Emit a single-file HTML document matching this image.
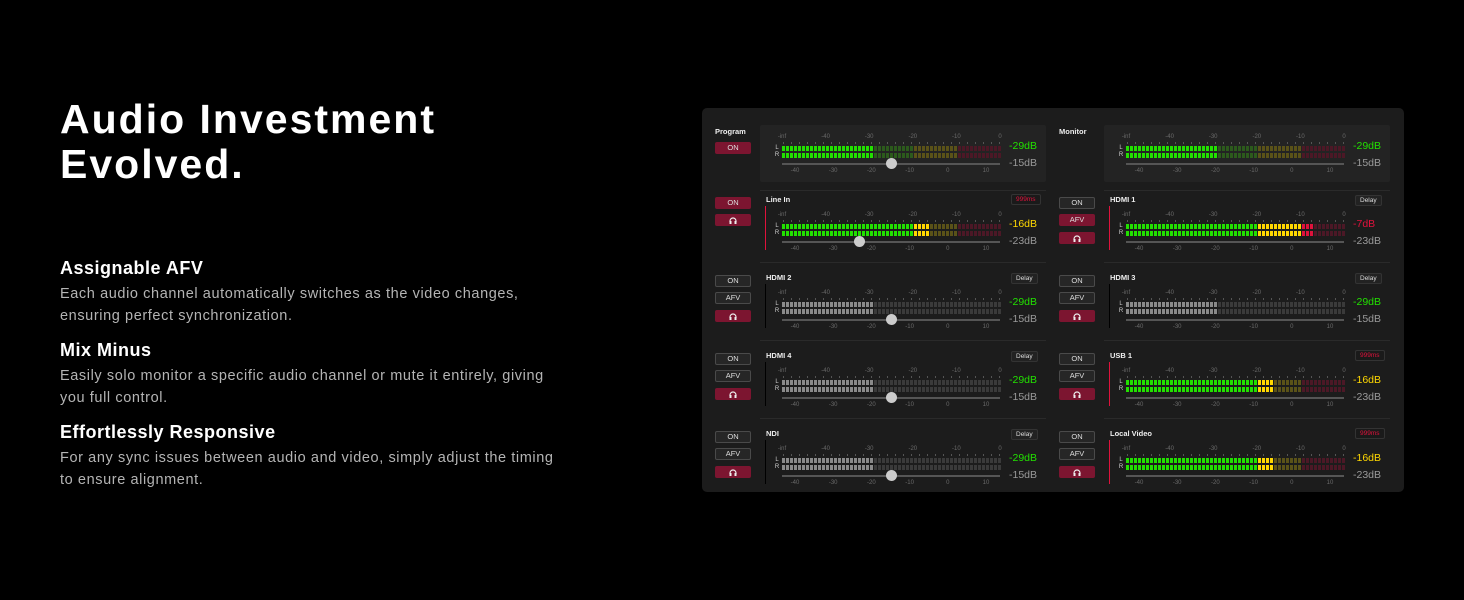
<!DOCTYPE html>
<html><head><meta charset="utf-8">
<style>
*{margin:0;padding:0;box-sizing:border-box}
body{width:1464px;height:600px;background:#000;position:relative;overflow:hidden;font-family:"Liberation Sans",sans-serif}
.a{position:absolute}
h1{position:absolute;left:60px;top:97px;color:#fff;font-size:41px;line-height:45px;font-weight:bold;letter-spacing:2px}
h2{position:absolute;left:60px;color:#fff;font-size:18px;font-weight:bold;letter-spacing:0.5px}
p.b{position:absolute;left:60px;color:#b4b4b4;font-size:14.5px;line-height:22px;letter-spacing:0.6px;width:540px}
#panel{position:absolute;left:702px;top:108px;width:702px;height:384px;background:#1c1c1c;border-radius:5px}
.t{position:absolute;font-size:6px;color:#6a6a6a;white-space:nowrap;transform:translateX(-50%)}
.btn{position:absolute;width:36px;height:12px;border-radius:2px;font-size:7.5px;color:#ddd;text-align:center;line-height:12px}
.on{background:#7c1530}
.off{background:#262626;border:1px solid #4a4a4a;line-height:10px}
.nm{position:absolute;font-size:7.5px;font-weight:bold;color:#eee}
.tag{position:absolute;font-size:6.5px;height:11px;line-height:10px;padding:0 4px;border:1px solid #333;border-radius:2px;background:#1a1a1a}
.db{position:absolute;font-size:10.5px;white-space:nowrap}
</style></head><body>
<h1>Audio Investment<br>Evolved.</h1>
<h2 style="top:258px">Assignable AFV</h2>
<p class="b" style="top:283px">Each audio channel automatically switches as the video changes,<br>ensuring perfect synchronization.</p>
<h2 style="top:340px">Mix Minus</h2>
<p class="b" style="top:365px">Easily solo monitor a specific audio channel or mute it entirely, giving<br>you full control.</p>
<h2 style="top:422px">Effortlessly Responsive</h2>
<p class="b" style="top:447px">For any sync issues between audio and video, simply adjust the timing<br>to ensure alignment.</p>
<div id="panel"></div>
<div id="root"></div>
<script>
var R=document.getElementById('root'),h='';
function add(s){h+=s}
var G='#22e000',Gd='#2c5a1c',Gy='#8a8a8a',Gyd='#3a3a3a',Y='#ffd800',Yd='#5a5218',Rd='#e0123c',Rdd='#4c1826';
function meter(ox,y,lvl,gray){
 var x0=ox+782,n=55,sw=4;
 var tl=['-inf','-40','-30','-20','-10','0'];
 for(var i=0;i<6;i++){add('<div class="t" style="left:'+(x0+i*43.6)+'px;top:'+(y-13)+'px">'+tl[i]+'</div>');}
 for(var i=0;i<n;i+=2){add('<div class="a" style="left:'+(x0+i*sw+1)+'px;top:'+(y-5)+'px;width:1px;height:2px;background:#555"></div>');}
 add('<div class="t" style="left:'+(x0-5)+'px;top:'+(y-2)+'px;color:#ccc">L</div><div class="t" style="left:'+(x0-5)+'px;top:'+(y+5)+'px;color:#ccc">R</div>');
 for(var r=0;r<2;r++)for(var i=0;i<n;i++){
  var db=-50+(i+0.5)*50/n, lit=db<lvl, c;
  if(gray){c=lit?Gy:Gyd}
  else if(db<-20)c=lit?G:Gd;else if(db<-10)c=lit?Y:Yd;else c=lit?Rd:Rdd;
  add('<div class="a" style="left:'+(x0+i*sw)+'px;top:'+(y-1+r*7)+'px;width:3px;height:5px;background:'+c+'"></div>');
 }
}
function fader(ox,y,k){
 add('<div class="a" style="left:'+(ox+782)+'px;top:'+y+'px;width:218px;height:2px;background:#555"></div>');
 add('<div class="a" style="left:'+(ox+k-5)+'px;top:'+(y-5)+'px;width:11px;height:11px;border-radius:50%;background:#ccc"></div>');
 var tl=['-40','-30','-20','-10','0','10'];
 for(var i=0;i<6;i++)add('<div class="t" style="left:'+(ox+795+i*38.2)+'px;top:'+(y+5)+'px">'+tl[i]+'</div>');
}
function dbtxt(ox,y,a,ac,b){
 add('<div class="db" style="left:'+(ox+1009)+'px;top:'+(y-5)+'px;color:'+ac+'">'+a+'</div>');
 add('<div class="db" style="left:'+(ox+1009)+'px;top:'+(y+12)+'px;color:#999">'+b+'</div>');
}
var hp='<svg width="8" height="7" viewBox="0 0 8 7" style="margin-top:2.5px"><path d="M1 5V4a3 3 0 0 1 6 0v1" stroke="#eee" stroke-width="1.2" fill="none"/><rect x="0.5" y="4" width="2" height="3" fill="#eee"/><rect x="5.5" y="4" width="2" height="3" fill="#eee"/></svg>';
[[0,'Program'],[344,'Monitor']].forEach(function(c){var ox=c[0];
 add('<div class="nm" style="left:'+(ox+715)+'px;top:127px">'+c[1]+'</div>');
 if(ox==0)add('<div class="btn on" style="left:715px;top:142px">ON</div>');
 add('<div class="a" style="left:'+(ox+760)+'px;top:125px;width:286px;height:57px;background:#232323;border-radius:2px"></div>');
 meter(ox,147,-29,false);fader(ox,163,ox+891);dbtxt(ox,145,'-29dB',G,'-15dB');
 add('<div class="a" style="left:'+(ox+760)+'px;top:190px;width:286px;height:1px;background:#2a2a2a"></div>');
});
var rows=[
 [0,0,'Line In','999',1,-16,859,'-16dB',Y,'-23dB'],
 [344,0,'HDMI 1','Delay',2,-7,858,'-7dB',Rd,'-23dB'],
 [0,1,'HDMI 2','Delay',0,-29,891,'-29dB',G,'-15dB'],
 [344,1,'HDMI 3','Delay',0,-29,891,'-29dB',G,'-15dB'],
 [0,2,'HDMI 4','Delay',0,-29,891,'-29dB',G,'-15dB'],
 [344,2,'USB 1','999',1,-16,859,'-16dB',Y,'-23dB'],
 [0,3,'NDI','Delay',0,-29,891,'-29dB',G,'-15dB'],
 [344,3,'Local Video','999',1,-16,859,'-16dB',Y,'-23dB']];
rows.forEach(function(r){
 var ox=r[0],oy=r[1]*78,st=r[4],gray=st==0;
 add('<div class="nm" style="left:'+(ox+766)+'px;top:'+(195+oy)+'px">'+r[2]+'</div>');
 if(r[3]=='999')add('<div class="tag" style="left:'+(ox+1011)+'px;top:'+(194+oy)+'px;color:#e0123c">999ms</div>');
 else add('<div class="tag" style="left:'+(ox+1011)+'px;top:'+(195+oy)+'px;color:#ddd;background:#222">Delay</div>');
 add('<div class="a" style="left:'+(ox+765)+'px;top:'+(206+oy)+'px;width:1px;height:44px;background:'+(gray?'#000':'#e0123c')+'"></div>');
 meter(ox,225+oy,r[5],gray);fader(ox,241+oy,ox+r[6]);dbtxt(ox,223+oy,r[7],r[8],r[9]);
 var isAfv=!(ox==0&&r[1]==0);
 if(!isAfv){
  add('<div class="btn on" style="left:715px;top:197px">ON</div>');
  add('<div class="btn on" style="left:715px;top:214px">'+hp+'</div>');
 }else{
  add('<div class="btn off" style="left:'+(ox+715)+'px;top:'+(197+oy)+'px">ON</div>');
  add('<div class="btn '+(st==2?'on':'off')+'" style="left:'+(ox+715)+'px;top:'+(214+oy)+'px">AFV</div>');
  add('<div class="btn on" style="left:'+(ox+715)+'px;top:'+(232+oy)+'px">'+hp+'</div>');
 }
 if(r[1]<3)add('<div class="a" style="left:'+(ox+760)+'px;top:'+(262+oy)+'px;width:286px;height:1px;background:#2a2a2a"></div>');
});
R.innerHTML=h;
</script>
</body></html>
